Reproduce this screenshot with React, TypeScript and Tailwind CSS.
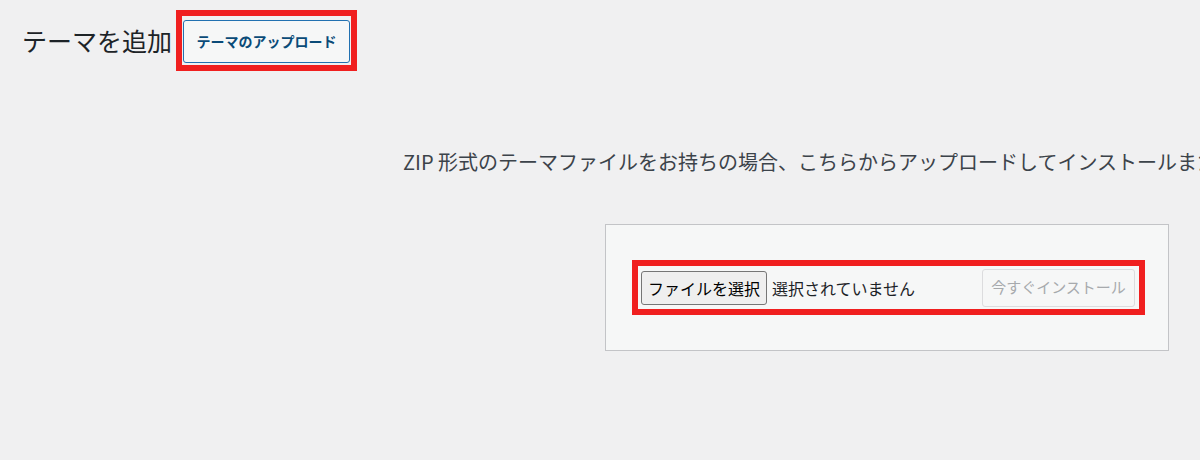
export default function App() {
  return (
    <div className="h-[460px] w-[1200px] overflow-hidden bg-[#f0f0f1] font-['Noto_Sans_CJK_JP','Noto_Sans',sans-serif] text-[#1d2327]">
      {/* ヘッダー */}
      <div className="flex items-center pl-[22px] pt-[10px]">
        <h1 className="text-[25px] font-normal leading-none">テーマを追加</h1>
        <div className="ml-[4px] border-[6px] border-[#f01f1f] px-[1px] pb-[2px] pt-[4px]">
          <button className="h-[43px] w-[167px] rounded-[3px] border border-[#2271b1] bg-[#f6f7f7] text-[14px] font-bold text-[#0a4b78]">
            テーマのアップロード
          </button>
        </div>
      </div>

      {/* 説明 */}
      <p className="mt-[81px] whitespace-nowrap pl-[403px] text-[20px] leading-[20px] text-[#3c434a]">
        ZIP 形式のテーマファイルをお持ちの場合、こちらからアップロードしてインストールまたは更新できます。
      </p>

      {/* アップロードフォーム */}
      <div className="ml-[605px] mt-[52px] h-[127px] w-[564px] border border-[#c3c4c7] bg-[#f6f7f7] pl-[26px] pt-[35px]">
        <div className="flex h-[55px] w-[513px] items-center border-[6px] border-[#f01f1f]">
          <button className="ml-[3px] h-[34px] w-[126px] rounded-[3px] border border-[#767676] bg-[#efefef] text-[16px] text-black">
            ファイルを選択
          </button>
          <span className="ml-[5px] text-[16px] text-[#1d2327]">選択されていません</span>
          <button
            disabled
            className="ml-auto mr-[4px] h-[38px] w-[153px] rounded-[3px] border border-[#dcdcde] bg-[#f6f7f7] text-[15px] text-[#a7aaad]"
          >
            今すぐインストール
          </button>
        </div>
      </div>
    </div>
  )
}
